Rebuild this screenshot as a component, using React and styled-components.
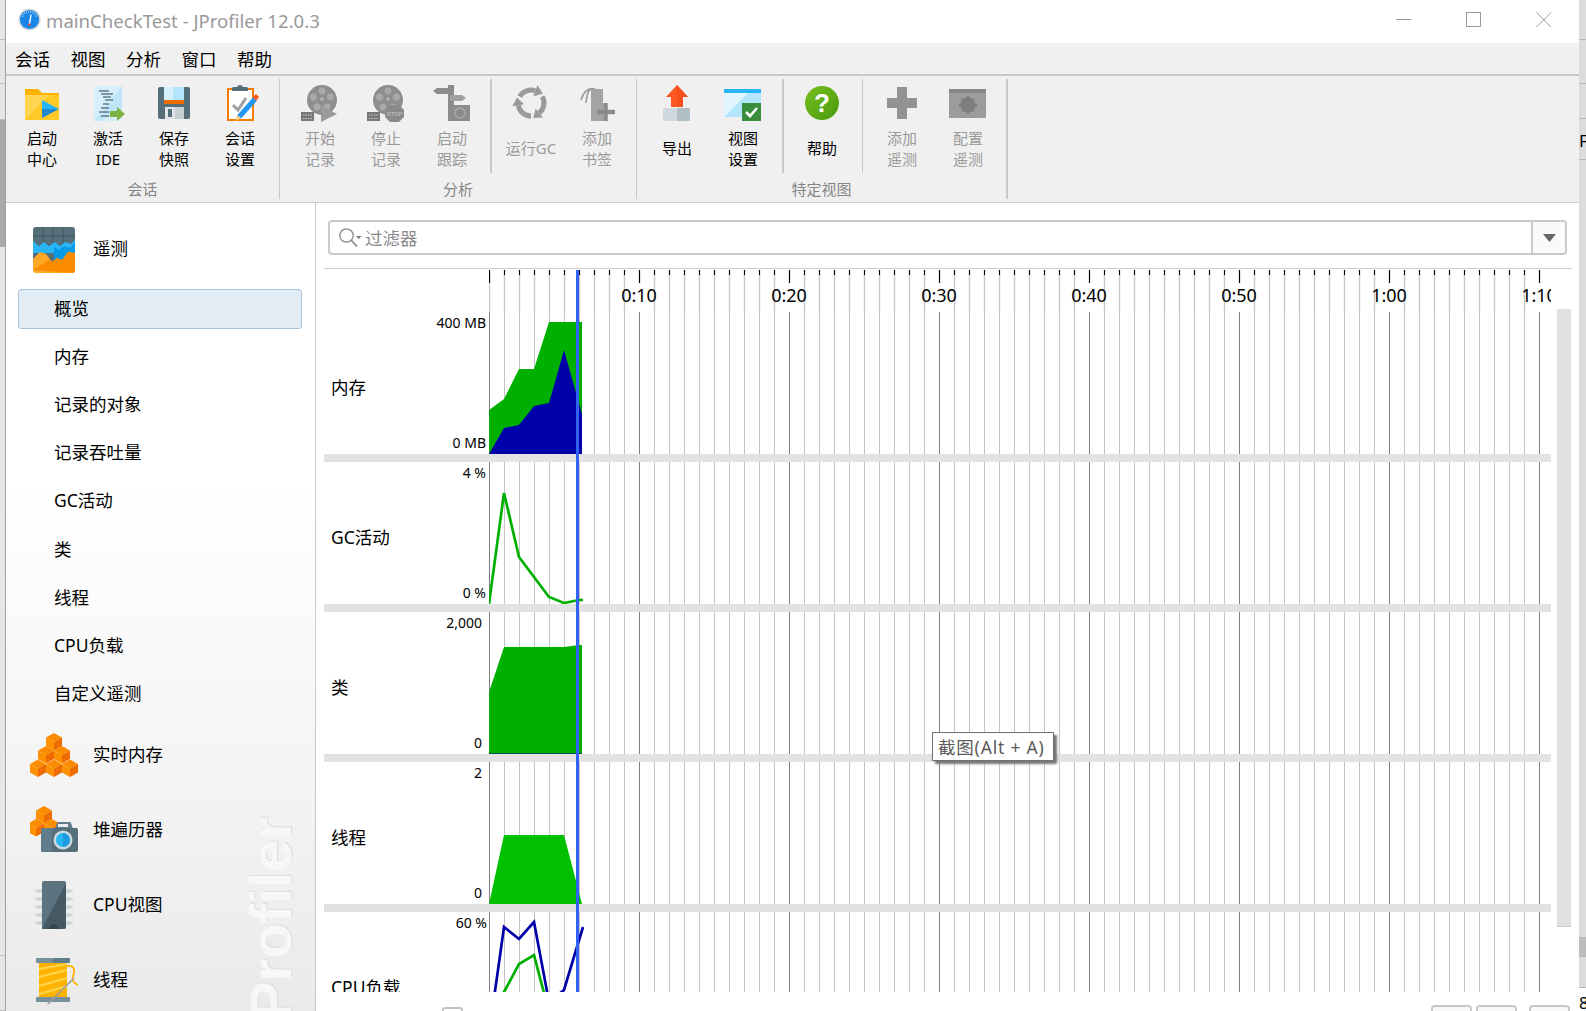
import React from "react";
import styled, { createGlobalStyle } from "styled-components";

const GlobalStyle = createGlobalStyle`
  html, body {
    margin: 0;
    padding: 0;
    overflow: hidden;
    background: #fff;
    font-family: "Noto Sans", "Noto Sans CJK SC", sans-serif;
  }
`;

const GRID_COUNT = 71;
const TIME_LABELS = ["0:10", "0:20", "0:30", "0:40", "0:50", "1:00", "1:10"];

const StopText = styled.text`
  font-family: "Liberation Sans", sans-serif;
  font-size: 6px;
  font-weight: 700;
  text-anchor: middle;
  fill: #b5b5b5;
`;

const HelpMark = styled.text`
  font-family: "Liberation Sans", sans-serif;
  font-size: 26px;
  font-weight: 700;
  text-anchor: middle;
  fill: #fff;
`;

const Cube = ({ x, y }) => (
  <g>
    <polygon points={`${x},${y} ${x + 8},${y + 4.5} ${x},${y + 9} ${x - 8},${y + 4.5}`} fill="#fb8c00" />
    <polygon points={`${x - 8},${y + 4.5} ${x},${y + 9} ${x},${y + 17.5} ${x - 8},${y + 13}`} fill="#ff9100" />
    <polygon points={`${x + 8},${y + 4.5} ${x},${y + 9} ${x},${y + 17.5} ${x + 8},${y + 13}`} fill="#ef6c00" />
  </g>
);

const ReelBase = () => (
  <g>
    <circle cx="22" cy="17" r="15" fill="#8e8e8e" />
    <circle cx="22" cy="8" r="3.4" fill="#a9a9a9" />
    <circle cx="13.5" cy="14" r="3.4" fill="#a9a9a9" />
    <circle cx="30.5" cy="14" r="3.4" fill="#a9a9a9" />
    <circle cx="17" cy="24" r="3.4" fill="#a9a9a9" />
    <circle cx="27" cy="24" r="3.4" fill="#a9a9a9" />
    <circle cx="22" cy="16" r="1.8" fill="#b5b5b5" />
    <rect x="1" y="29" width="13" height="9" fill="#777" />
    <path d="M3 32h9M3 35.5h9" stroke="#ccc" strokeWidth="1.2" strokeDasharray="1.5 1" />
  </g>
);

const icons = {
  session: (
    <>
      <path d="M3 6h13l4 4h17v27H3z" fill="#ffb300" />
      <path d="M3 12h34v25H3z" fill="#ffd54f" />
      <path d="M3 37l24-25h10v25z" fill="#ffca28" />
      <polygon points="20,17 37,26 20,26" fill="#29b6f6" />
      <polygon points="20,26 37,26 20,35" fill="#1e88d0" />
    </>
  ),
  ide: (
    <>
      <path d="M6 3h28v35H6z" fill="#d6effb" />
      <path d="M34 3v24L12 38H6z" fill="#bfe6f8" />
      <path d="M11 8h10M13 11h12M15 14h8M17 17h8M15 21h6M13 25h8M11 29h10M13 33h8" stroke="#607d8b" strokeWidth="1.6" />
      <polygon points="22,28 29,28 29,24 37,31 29,38 29,34 22,34" fill="#7cb342" />
    </>
  ),
  save: (
    <>
      <rect x="4" y="4" width="32" height="32" rx="2" fill="#546e7a" />
      <rect x="10" y="4" width="20" height="13" fill="#b3e5fc" />
      <rect x="10" y="4" width="9" height="13" fill="#d4f1fd" />
      <rect x="10" y="17" width="20" height="4" fill="#ef6c00" />
      <rect x="11" y="24" width="19" height="12" fill="#dfe5e8" />
      <rect x="21" y="24" width="9" height="12" fill="#c5d0d5" />
      <rect x="14" y="26" width="4" height="8" fill="#546e7a" />
    </>
  ),
  settings: (
    <>
      <rect x="8" y="6" width="25" height="31" fill="#fff" stroke="#f57c00" strokeWidth="2" />
      <path d="M12 8V5q0-1 2-1h3q1-2 3-2t3 2h3q2 0 2 1v3z" fill="#546e7a" />
      <polyline points="13,22 18,27 26,15" fill="none" stroke="#a0a0a0" strokeWidth="3" />
      <path d="M19 34L35 16" stroke="#2196f3" strokeWidth="5" />
      <path d="M33 14l3-3 3 3-3 4z" fill="#ff5722" />
      <path d="M16 38l1-6 4 3z" fill="#ffcc80" />
    </>
  ),
  startRec: (
    <>
      <ReelBase />
      <polygon points="21,22 37,31 21,39" fill="#9a9a9a" />
    </>
  ),
  stopRec: (
    <>
      <ReelBase />
      <polygon points="24,22 33,22 38,27 38,34 33,39 24,39 19,34 19,27" fill="#8a8a8a" />
      <StopText x="28.5" y="32.5">STOP</StopText>
    </>
  ),
  tracking: (
    <>
      <rect x="16" y="2" width="6" height="36" fill="#8c8c8c" />
      <polygon points="1,8 5,5 18,5 18,11 5,11" fill="#8c8c8c" />
      <polygon points="18,12 30,12 34,15 30,18 18,18" fill="#a0a0a0" />
      <rect x="18" y="22" width="20" height="16" fill="#8c8c8c" />
      <circle cx="28" cy="30" r="5" fill="none" stroke="#a8a8a8" strokeWidth="1.5" />
    </>
  ),
  gc: (
    <>
      {[0, 120, 240].map((turn) => (
        <g key={turn} transform={`rotate(${turn} 20 20)`}>
          <path d="M8.7 13.500A13 13 0 0 1 24.400 7.800" fill="none" stroke="#9a9a9a" strokeWidth="5" />
          <polygon points="26.400,2.200 22.400,13.400 31.900,10.500" fill="#9a9a9a" />
        </g>
      ))}
    </>
  ),
  bookmark: (
    <>
      <path d="M14 6h12v32H14z" fill="#a4a4a4" />
      <path d="M18 6C11 4 7 8 4 17M16 6c-5 0-6 5-7 14" fill="none" stroke="#9a9a9a" strokeWidth="1.6" />
      <path d="M20 29h18M28.5 20v18" stroke="#8a8a8a" strokeWidth="4.5" />
    </>
  ),
  exportData: (
    <>
      <polygon points="20,2 31,14 26,14 26,24 14,24 14,14 9,14" fill="#ff5722" />
      <polygon points="20,2 31,14 26,14 26,24 20,24" fill="#f4511e" />
      <rect x="6" y="25" width="14" height="13" rx="1" fill="#cfd8dc" />
      <rect x="20" y="25" width="13" height="13" rx="1" fill="#b0bec5" />
    </>
  ),
  viewSettings: (
    <>
      <rect x="1" y="10" width="37" height="24" fill="#e1f5fe" />
      <polygon points="1,34 25,10 38,10 38,34" fill="#b3e5fc" />
      <rect x="1" y="6" width="37" height="4" fill="#29b6f6" />
      <rect x="19" y="20" width="19" height="18" fill="#388e3c" />
      <polyline points="23,29 27,33 34,25" fill="none" stroke="#fff" strokeWidth="2.6" />
    </>
  ),
  help: (
    <>
      <defs>
        <linearGradient id="helpFill" x1="0" y1="0" x2="1" y2="1">
          <stop offset="0" stopColor="#76c01e" />
          <stop offset="1" stopColor="#4a9a10" />
        </linearGradient>
      </defs>
      <circle cx="20" cy="20" r="17" fill="url(#helpFill)" />
      <HelpMark x="20" y="29">?</HelpMark>
    </>
  ),
  plus: <path d="M15 4h10v11h10v10H25v11H15V25H5V15h10z" fill="#929292" />,
  configure: (
    <>
      <rect x="1" y="6" width="37" height="29" fill="#9c9c9c" />
      <rect x="1" y="6" width="37" height="4" fill="#888" />
      <circle cx="20" cy="22" r="5.5" fill="none" stroke="#7d7d7d" strokeWidth="4" />
      <path d="M20 13v18M11 22h18M14 16l12 12M26 16L14 28" stroke="#7d7d7d" strokeWidth="2.4" />
    </>
  ),
};

const navIcons = {
  telemetry: (
    <>
      <rect x="3" y="2" width="42" height="43" rx="3" fill="#546e7a" />
      <path d="M13 2v22M23 2v22M33 2v22M3 11h42M3 20h42" stroke="#43565f" strokeWidth="1" />
      <path d="M3 16l6 5 5-4 5 4 6-4 5 4 5-4 6 2 4-4 v13H3z" fill="#29b6f6" />
      <path d="M24 45V22l5 3 5-4 6 2 5-6v16z" fill="#039be5" />
      <path d="M3 34l7-7 6 2 6 8 5-4 5 2 6-8 7 1v17a3 3 0 0 1-3 3H6a3 3 0 0 1-3-3z" fill="#ffa726" />
      <path d="M3 45l16-10 3 2 5-4 5 2 6-8 7 1v17a3 3 0 0 1-3 3z" fill="#fb8c00" />
    </>
  ),
  liveMemory: (
    <>
      <Cube x={24} y={2} />
      <Cube x={16} y={15} />
      <Cube x={32} y={15} />
      <Cube x={8} y={28.5} />
      <Cube x={24} y={28.5} />
      <Cube x={40} y={28.5} />
    </>
  ),
  heapWalker: (
    <>
      <Cube x={14} y={0} />
      <Cube x={6} y={13} />
      <Cube x={22} y={13} />
      <path d="M25 23l2-6q0-1 2-1h10q2 0 2 1l2 6z" fill="#607d8b" />
      <rect x="28" y="18" width="10" height="3" fill="#eceff1" />
      <rect x="11" y="22" width="37" height="24" rx="2" fill="#546e7a" />
      <rect x="11" y="22" width="11" height="24" rx="2" fill="#607d8b" />
      <circle cx="33" cy="34" r="9.5" fill="#cfd8dc" />
      <circle cx="33" cy="34" r="7" fill="#29b6f6" />
      <path d="M33 27a7 7 0 0 1 0 14z" fill="#1e9be0" />
    </>
  ),
  cpu: (
    <>
      <path d="M4 10l4-2h5v4H8zM4 18l4-2h5v4H8zM4 26l4-2h5v4H8zM4 34l4-2h5v4H8zM4 42l4-2h5v4H8z" fill="#cfd8dc" />
      <path d="M44 10l-4-2h-5v4h5zM44 18l-4-2h-5v4h5zM44 26l-4-2h-5v4h5zM44 34l-4-2h-5v4h5zM44 42l-4-2h-5v4h5z" fill="#cfd8dc" />
      <rect x="12" y="0" width="24" height="48" rx="2" fill="#5c7380" />
      <path d="M36 2v44a2 2 0 0 1-2 2H12z" fill="#455a64" />
      <path d="M19 48a5 5 0 0 1 10 0z" fill="#37474f" />
    </>
  ),
  threads: (
    <>
      <rect x="9" y="7" width="28" height="34" fill="#ffb300" />
      <path d="M9 13l28-5M9 21l28-7M9 30l28-8M9 38l28-8" stroke="#ffd54f" strokeWidth="2" />
      <rect x="6" y="2" width="34" height="5" rx="1" fill="#78909c" />
      <rect x="23" y="2" width="17" height="5" rx="1" fill="#607d8b" />
      <rect x="6" y="41" width="34" height="5" rx="1" fill="#78909c" />
      <path d="M37 10c8-1 8 5 6 10-1 4 1 8 5 9" fill="none" stroke="#ffb300" strokeWidth="1.8" />
      <path d="M17 49L44 22" stroke="#9e9e9e" strokeWidth="1.6" />
    </>
  ),
};

const toolGroups = [
  {
    title: "会话",
    $pad: "0 6px 0 3px",
    items: [
      { icon: "session", label: "启动\n中心" },
      { icon: "ide", label: "激活\nIDE" },
      { icon: "save", label: "保存\n快照" },
      { icon: "settings", label: "会话\n设置" },
    ],
  },
  {
    title: "分析",
    $pad: "0 6px 0 7px",
    items: [
      { icon: "startRec", label: "开始\n记录", off: true },
      { icon: "stopRec", label: "停止\n记录", off: true },
      { icon: "tracking", label: "启动\n跟踪", off: true },
      { divider: [5, 6, 2] },
      { icon: "gc", label: "运行GC", off: true },
      { icon: "bookmark", label: "添加\n书签", off: true },
    ],
  },
  {
    title: "特定视图",
    $pad: "0 5px 0 7px",
    $heavy: true,
    items: [
      { icon: "exportData", label: "导出" },
      { icon: "viewSettings", label: "视图\n设置" },
      { divider: [6, 5, 2] },
      { icon: "help", label: "帮助" },
      { divider: [7, 6, 1] },
      { icon: "plus", label: "添加\n遥测", off: true },
      { icon: "configure", label: "配置\n遥测", off: true },
    ],
  },
];

const telemetryItems = ["内存", "记录的对象", "记录吞吐量", "GC活动", "类", "线程", "CPU负载", "自定义遥测"];

const navSections = [
  { icon: "liveMemory", label: "实时内存" },
  { icon: "heapWalker", label: "堆遍历器" },
  { icon: "cpu", label: "CPU视图" },
  { icon: "threads", label: "线程" },
];

const toPoints = (list) => list.map((p) => p.join(",")).join(" ");

const chartRows = [
  {
    name: "内存",
    top: "400 MB",
    bottom: "0 MB",
    inset: 3,
    shapes: [
      { fill: "#00b000", points: [[0, 98], [15, 87], [30, 57], [45, 57], [60, 10], [93, 10], [93, 142], [0, 142]] },
      { fill: "#0000aa", points: [[0, 142], [15, 116], [30, 113], [45, 94], [60, 91], [75, 38], [93, 102], [93, 142]] },
    ],
  },
  {
    name: "GC活动",
    top: "4 %",
    bottom: "0 %",
    inset: 3,
    lines: [{ stroke: "#00b000", points: [[0, 142], [15, 31], [30, 95], [45, 115], [60, 135], [75, 141], [90, 138], [94, 138]] }],
  },
  {
    name: "类",
    top: "2,000",
    bottom: "0",
    inset: 7,
    shapes: [
      { fill: "#00b000", points: [[0, 80], [15, 35], [75, 35], [90, 33], [93, 33], [93, 141], [0, 141]] },
      { fill: "#004a50", points: [[0, 141], [93, 141], [93, 142], [0, 142]] },
    ],
  },
  {
    name: "线程",
    top: "2",
    bottom: "0",
    inset: 7,
    shapes: [{ fill: "#00c000", points: [[0, 142], [15, 73], [75, 73], [93, 142]] }],
  },
  {
    name: "CPU负载",
    top: "60 %",
    bottom: "0 %",
    inset: 2,
    lines: [
      { stroke: "#00b000", points: [[0, 100], [15, 80], [30, 52], [45, 43], [60, 100]] },
      { stroke: "#0000aa", points: [[0, 122], [15, 15], [30, 27], [45, 10], [60, 90], [75, 78], [94, 15]] },
    ],
  },
];

export default function App() {
  return (
    <Screen>
      <GlobalStyle />
      <LeftStrip>
        <StripPart $h={40} />
        <StripPart $h={44} />
        <StripPart $h={36} />
        <StripPart $h={127} $dark />
        <StripPart $h={709} />
        <StripPart $h={55} />
      </LeftStrip>
      <Window>
        <TitleBar>
          <AppLogo viewBox="0 0 24 24">
            <circle cx="12" cy="12" r="11.5" fill="#cfd8dc" />
            <circle cx="12" cy="12" r="10" fill="#1a86e8" />
            <path d="M4.5 9a8 8 0 0 1 15 0" fill="none" stroke="#a9d5fb" strokeWidth="1.6" strokeDasharray="1 1" />
            <path d="M13.6 7l-1.7 10" stroke="#fff" strokeWidth="1.4" />
            <circle cx="11.8" cy="17.6" r="1.3" fill="#f44336" />
          </AppLogo>
          <TitleText>mainCheckTest - JProfiler 12.0.3</TitleText>
          <WindowButtons>
            <WindowButton>
              <svg width="16" height="16" viewBox="0 0 16 16">
                <path d="M0 7.5h15" stroke="#999" strokeWidth="1" />
              </svg>
            </WindowButton>
            <WindowButton>
              <svg width="16" height="16" viewBox="0 0 16 16">
                <rect x="0.5" y="0.5" width="14" height="14" fill="none" stroke="#999" strokeWidth="1" />
              </svg>
            </WindowButton>
            <WindowButton>
              <svg width="16" height="16" viewBox="0 0 16 16">
                <path d="M0.5 0.5l14.5 14.5M15 0.5L0.5 15" stroke="#999" strokeWidth="1" />
              </svg>
            </WindowButton>
          </WindowButtons>
        </TitleBar>

        <MenuBar>
          {["会话", "视图", "分析", "窗口", "帮助"].map((m) => (
            <MenuItem key={m}>{m}</MenuItem>
          ))}
        </MenuBar>

        <Toolbar>
          {toolGroups.map((group) => (
            <ToolGroup key={group.title} $heavy={group.$heavy}>
              <GroupRow $pad={group.$pad}>
                {group.items.map((item, i) =>
                  item.divider ? (
                    <GroupDivider key={i} $before={item.divider[0]} $after={item.divider[1]} $w={item.divider[2]} />
                  ) : (
                    <ToolButton key={item.label}>
                      <IconSlot viewBox="0 0 40 40">{icons[item.icon]}</IconSlot>
                      <ToolLabel $off={item.off}>{item.label}</ToolLabel>
                    </ToolButton>
                  )
                )}
              </GroupRow>
              <GroupTitle>{group.title}</GroupTitle>
            </ToolGroup>
          ))}
        </Toolbar>

        <Main>
          <Sidebar>
            <NavSection>
              <NavIcon viewBox="0 0 48 48">{navIcons.telemetry}</NavIcon>
              <NavText>遥测</NavText>
            </NavSection>
            <SubList>
              <SubItem>
                <SubLabel $selected>概览</SubLabel>
              </SubItem>
              {telemetryItems.map((t) => (
                <SubItem key={t}>
                  <SubLabel>{t}</SubLabel>
                </SubItem>
              ))}
            </SubList>
            {navSections.map((s) => (
              <NavEntry key={s.label}>
                <NavIcon viewBox="0 0 48 48">{navIcons[s.icon]}</NavIcon>
                <NavText>{s.label}</NavText>
              </NavEntry>
            ))}
            <Watermark>JProfiler</Watermark>
          </Sidebar>

          <Content>
            <FilterBox>
              <FilterField>
                <svg width="24" height="22" viewBox="0 0 24 22">
                  <circle cx="8.5" cy="8.5" r="6.7" fill="none" stroke="#888" strokeWidth="1.3" />
                  <path d="M13.5 13.5l5.5 6" stroke="#888" strokeWidth="1.8" />
                  <path d="M18 9h5.5l-2.7 3z" fill="#777" />
                </svg>
                过滤器
              </FilterField>
              <FilterDrop>
                <svg width="13" height="8" viewBox="0 0 13 8">
                  <path d="M0 0h13L6.500 8z" fill="#666" />
                </svg>
              </FilterDrop>
            </FilterBox>

            <ChartPanel>
              <ChartColumn>
                <Timeline>
                  <TimeAxis width="1062" height="42" viewBox="0 0 1062 42">
                    {Array.from({ length: GRID_COUNT }, (_, i) => {
                      const x = i * 15 + 0.5;
                      const major = i % 10 === 0;
                      return (
                        <g key={i}>
                          {(!major || i === 0) && <path d={`M${x} 5V42`} stroke="#c8c8c8" strokeWidth="1.4" />}
                          <path d={`M${x} 0V${major ? 13 : 5}`} stroke="#000" strokeWidth="1.2" />
                        </g>
                      );
                    })}
                    {TIME_LABELS.map((t, i) => (
                      <TimeText key={t} x={(i + 1) * 150} y="32">
                        {t}
                      </TimeText>
                    ))}
                  </TimeAxis>
                </Timeline>
                <RowsClip>
                  {chartRows.map((row) => (
                    <RowBlock key={row.name}>
                      <ChartRow>
                        <RowLabels>
                          <RowName>{row.name}</RowName>
                          <RowScale $inset={row.inset}>
                            <span>{row.top}</span>
                            <span>{row.bottom}</span>
                          </RowScale>
                        </RowLabels>
                        <svg width="1062" height="142" viewBox="0 0 1062 142">
                          {Array.from({ length: GRID_COUNT }, (_, i) => (
                            <path
                              key={i}
                              d={`M${i * 15 + 0.5} 0V142`}
                              stroke={i % 10 === 0 ? "#808080" : "#c4c4c4"}
                              strokeWidth="1"
                            />
                          ))}
                          {row.shapes &&
                            row.shapes.map((s) => <polygon key={s.fill} points={toPoints(s.points)} fill={s.fill} />)}
                          {row.lines &&
                            row.lines.map((l) => (
                              <polyline key={l.stroke} points={toPoints(l.points)} fill="none" stroke={l.stroke} strokeWidth="2.7" />
                            ))}
                        </svg>
                      </ChartRow>
                      <RowDivider />
                    </RowBlock>
                  ))}
                </RowsClip>
                <Playhead />
              </ChartColumn>
              <ScrollThumb />
            </ChartPanel>

            <Footer>
              <CheckBox />
              <FooterButtons>
                <FooterButton $w={41} />
                <FooterButton $w={41} />
                <FooterButton $w={41} $gap={8} />
              </FooterButtons>
            </Footer>

            <Tooltip>截图(Alt + A)</Tooltip>
          </Content>
        </Main>
      </Window>
      <RightStrip>
        <StripEdge $h={40} />
        <StripEdge $h={44} />
        <StripEdge $h={35} />
        <StripEdge $h={41}>
          <StripLetter>F</StripLetter>
        </StripEdge>
        <StripEdge $h={778} />
        <StripEdge $h={19} $dark />
        <StripEdge $h={31} />
        <StripEdge $h={23} $white>
          <StripLetter $low>8</StripLetter>
        </StripEdge>
      </RightStrip>
    </Screen>
  );
}

const Screen = styled.div`
  display: flex;
  width: 1586px;
  height: 1011px;
  overflow: hidden;
  background: #fff;
`;

const LeftStrip = styled.div`
  display: flex;
  flex-direction: column;
  width: 6px;
  flex: none;
  border-right: 1px solid #a0a0a0;
  box-sizing: border-box;
`;

const StripPart = styled.div`
  height: ${(p) => p.$h}px;
  flex: none;
  box-sizing: border-box;
  background: ${(p) => (p.$dark ? "#a9a9a9" : "#e6e6e6")};
  border-bottom: 1px solid ${(p) => (p.$dark ? "#a9a9a9" : "#bdbdbd")};
`;

const Window = styled.div`
  display: flex;
  flex-direction: column;
  width: 1573px;
  flex: none;
  background: #fff;
`;

const TitleBar = styled.div`
  display: flex;
  align-items: center;
  height: 43px;
  flex: none;
  padding-left: 12px;
  padding-top: 0;
  background: #fff;
`;

const AppLogo = styled.svg`
  width: 23px;
  height: 23px;
  flex: none;
  margin-right: 5px;
  margin-top: -4px;
`;

const TitleText = styled.div`
  font-size: 18.6px;
  color: #999;
  margin-top: -3px;
  white-space: nowrap;
`;

const WindowButtons = styled.div`
  display: flex;
  margin-left: auto;
  margin-top: -3px;
`;

const WindowButton = styled.div`
  display: flex;
  align-items: center;
  justify-content: center;
  width: 70px;
  height: 36px;

  svg {
    display: block;
  }
`;

const MenuBar = styled.div`
  display: flex;
  align-items: center;
  gap: 20.5px;
  height: 33px;
  flex: none;
  box-sizing: border-box;
  padding: 0 0 0 9px;
  background: #f0f0f0;
  border-bottom: 2px solid #c8c8c8;
`;

const MenuItem = styled.span`
  font-size: 17.5px;
  line-height: 24px;
  color: #000;
`;

const Toolbar = styled.div`
  display: flex;
  align-items: flex-start;
  height: 127px;
  flex: none;
  box-sizing: border-box;
  padding-top: 3px;
  background: #f0f0f0;
  border-bottom: 1px solid #ccc;
`;

const ToolGroup = styled.div`
  display: flex;
  flex-direction: column;
  height: 120px;
  border-right: ${(p) => (p.$heavy ? 2 : 1)}px solid #c8c8c8;
`;

const GroupRow = styled.div`
  display: flex;
  height: 94px;
  padding: ${(p) => p.$pad};
`;

const GroupDivider = styled.div`
  width: ${(p) => p.$w}px;
  margin: 0 ${(p) => p.$after}px 0 ${(p) => p.$before}px;
  background: #c8c8c8;
`;

const ToolButton = styled.div`
  display: flex;
  flex-direction: column;
  align-items: center;
  width: 66px;
  padding-top: 4px;
  box-sizing: border-box;
`;

const IconSlot = styled.svg`
  width: 40px;
  height: 40px;
  flex: none;
`;

const ToolLabel = styled.div`
  display: flex;
  flex: 1;
  align-items: center;
  margin-top: 3px;
  padding-bottom: 2px;
  font-size: 15px;
  line-height: 21px;
  text-align: center;
  white-space: pre-line;
  color: ${(p) => (p.$off ? "#9a9a9a" : "#000")};
`;

const GroupTitle = styled.div`
  margin-top: 6px;
  font-size: 15px;
  line-height: 20px;
  text-align: center;
  color: #858585;
`;

const Main = styled.div`
  display: flex;
  flex: 1;
  min-height: 0;
`;

const Sidebar = styled.div`
  position: relative;
  width: 310px;
  flex: none;
  box-sizing: border-box;
  padding-top: 22px;
  overflow: hidden;
  border-right: 1px solid #c8c8c8;
  background: linear-gradient(#fff 35%, #f6f6f6 65%, #eaeaea 100%);
`;

const NavSection = styled.div`
  display: flex;
  align-items: center;
  gap: 15px;
  height: 60px;
  padding-left: 24px;
  padding-bottom: 12px;
  box-sizing: border-box;
`;

const NavEntry = styled(NavSection)`
  height: 75px;
  padding-bottom: 0;
`;

const NavIcon = styled.svg`
  width: 48px;
  height: 48px;
  flex: none;
`;

const NavText = styled.span`
  margin-bottom: 3px;
  font-size: 17.5px;
  color: #000;
`;

const SubList = styled.div`
  display: flex;
  flex-direction: column;
`;

const SubItem = styled.div`
  display: flex;
  align-items: center;
  height: 48.1px;
  padding: 0 13px 0 12px;
`;

const SubLabel = styled.div`
  display: flex;
  align-items: center;
  flex: 1;
  height: 40px;
  box-sizing: border-box;
  padding: 0 0 3px 35px;
  font-size: 17.5px;
  color: #000;
  border-radius: 3px;
  border: 1px solid ${(p) => (p.$selected ? "#a9c6e0" : "transparent")};
  background: ${(p) => (p.$selected ? "#e2ecf5" : "transparent")};
`;

const Watermark = styled.div`
  position: absolute;
  top: 614px;
  left: 235px;
  writing-mode: vertical-rl;
  transform: rotate(180deg);
  font-family: "Liberation Sans", sans-serif;
  font-size: 58px;
  line-height: 60px;
  font-weight: 700;
  white-space: nowrap;
  color: #f7f7f7;
  text-shadow: 1px 1px 1px #dcdcdc;
`;

const Content = styled.div`
  position: relative;
  display: flex;
  flex-direction: column;
  flex: 1;
  min-width: 0;
  background: #fff;
`;

const FilterBox = styled.div`
  display: flex;
  height: 35px;
  flex: none;
  box-sizing: border-box;
  margin: 17px 12px 13px;
  border: 2px solid #cacaca;
  border-radius: 4px;
  overflow: hidden;
`;

const FilterField = styled.div`
  display: flex;
  align-items: center;
  gap: 3px;
  flex: 1;
  padding-left: 8px;
  font-size: 17.5px;
  color: #8a8a8a;
`;

const FilterDrop = styled.div`
  display: flex;
  align-items: center;
  justify-content: center;
  width: 32px;
  background: #fafafa;
  border-left: 2px solid #cacaca;
`;

const ChartPanel = styled.div`
  display: flex;
  gap: 6px;
  flex: none;
  height: 724px;
  margin-left: 8px;
  border-top: 1px solid #ccc;
  width: 1248px;
  box-sizing: border-box;
  padding-top: 1px;
`;

const ChartColumn = styled.div`
  position: relative;
  display: flex;
  flex-direction: column;
  width: 1227px;
  flex: none;
  height: 722px;
`;

const Timeline = styled.div`
  display: flex;
  justify-content: flex-end;
  height: 42px;
  flex: none;
`;

const TimeAxis = styled.svg`
  display: block;
`;

const TimeText = styled.text`
  font-size: 18px;
  text-anchor: middle;
  fill: #000;
`;

const RowsClip = styled.div`
  height: 680px;
  overflow: hidden;
  flex: none;
`;

const RowBlock = styled.div`
  display: flex;
  flex-direction: column;
`;

const ChartRow = styled.div`
  display: flex;
  height: 142px;

  svg {
    display: block;
    flex: none;
  }
`;

const RowLabels = styled.div`
  display: flex;
  width: 165px;
  flex: none;
`;

const RowName = styled.div`
  display: flex;
  align-items: center;
  flex: 1;
  padding: 7px 0 0 7px;
  font-size: 17.5px;
  color: #000;
  white-space: nowrap;
`;

const RowScale = styled.div`
  display: flex;
  flex-direction: column;
  justify-content: space-between;
  align-items: flex-end;
  padding: 1px ${(p) => p.$inset}px 1px 0;
  font-size: 14px;
  line-height: 20px;
  color: #000;
`;

const RowDivider = styled.div`
  height: 8px;
  flex: none;
  background: #e2e2e2;
`;

const Playhead = styled.div`
  position: absolute;
  top: 0;
  left: 252px;
  width: 3px;
  height: 722px;
  background: #2f62f5;
`;

const ScrollThumb = styled.div`
  width: 14px;
  height: 618px;
  flex: none;
  margin-top: 39px;
  box-sizing: border-box;
  background: #e0e0e0;
  border-bottom: 1px solid #ccc;
`;

const Footer = styled.div`
  display: flex;
  justify-content: space-between;
  flex: 1;
  min-height: 0;
  padding: 15px 9px 0 126px;
  overflow: hidden;
`;

const CheckBox = styled.div`
  width: 21px;
  height: 20px;
  box-sizing: border-box;
  background: #fff;
  border: 2px solid #c4c4c4;
  border-radius: 3px;
`;

const FooterButtons = styled.div`
  display: flex;
  gap: 4px;
  margin-top: -2px;
`;

const FooterButton = styled.div`
  width: ${(p) => p.$w}px;
  height: 24px;
  box-sizing: border-box;
  margin-left: ${(p) => p.$gap || 0}px;
  background: #f8f8f8;
  border: 2px solid #c8c8c8;
  border-radius: 4px;
`;

const Tooltip = styled.div`
  position: absolute;
  left: 616px;
  top: 529px;
  width: 122px;
  height: 29px;
  box-sizing: border-box;
  display: flex;
  align-items: center;
  padding-left: 5px;
  background: #fff;
  border: 1px solid #707070;
  box-shadow: 3px 3px 2px #777;
  font-size: 17.5px;
  letter-spacing: 0.8px;
  color: #5a5a5a;
  white-space: nowrap;
`;

const RightStrip = styled.div`
  display: flex;
  flex-direction: column;
  flex: 1;
  min-width: 0;
  overflow: hidden;
`;

const StripEdge = styled.div`
  position: relative;
  height: ${(p) => p.$h}px;
  flex: none;
  box-sizing: border-box;
  overflow: hidden;
  background: ${(p) => (p.$white ? "#fff" : p.$dark ? "#bcbcbc" : "#dcdcdc")};
  border-bottom: 1px solid ${(p) => (p.$white ? "#fff" : "#b8b8b8")};
`;

const StripLetter = styled.span`
  position: absolute;
  left: 0;
  top: ${(p) => (p.$low ? 3 : 10)}px;
  font-size: 17px;
  color: #000;
`;
